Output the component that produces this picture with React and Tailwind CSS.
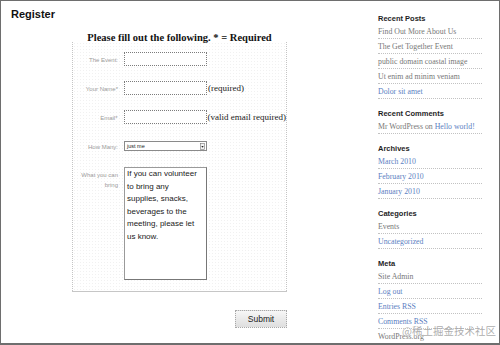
import { useState } from "react";

const sans = "font-['Liberation_Sans',Arial,sans-serif]";
const serif = "font-['Liberation_Serif','Times_New_Roman',serif]";

const sidebar = [
  {
    title: "Recent Posts",
    items: [
      [{ t: "Find Out More About Us" }],
      [{ t: "The Get Together Event" }],
      [{ t: "public domain coastal image" }],
      [{ t: "Ut enim ad minim veniam" }],
      [{ t: "Dolor sit amet", link: true }],
    ],
  },
  {
    title: "Recent Comments",
    items: [[{ t: "Mr WordPress on" }, { t: "Hello world!", link: true }]],
  },
  {
    title: "Archives",
    items: [
      [{ t: "March 2010", link: true }],
      [{ t: "February 2010", link: true }],
      [{ t: "January 2010", link: true }],
    ],
  },
  {
    title: "Categories",
    items: [[{ t: "Events" }], [{ t: "Uncategorized", link: true }]],
  },
  {
    title: "Meta",
    items: [
      [{ t: "Site Admin" }],
      [{ t: "Log out", link: true }],
      [{ t: "Entries RSS", link: true }],
      [{ t: "Comments RSS", link: true }],
      [{ t: "WordPress.org" }],
    ],
  },
];

const bringLines = [
  "If you can volunteer",
  "to bring any",
  "supplies, snacks,",
  "beverages to the",
  "meeting, please let",
  "us know.",
];

function Field({ label, note }) {
  const [value, setValue] = useState("");
  return (
    <div className="flex items-center">
      <span className={`w-[45px] pt-[2px] text-right text-[6px] leading-[8px] text-[#9b9b9b] ${sans}`}>
        {label}
      </span>
      <input
        value={value}
        onChange={(e) => setValue(e.target.value)}
        className="ml-[6px] h-[14px] w-[83px] shrink-0 border border-dotted border-[#7c7c7c] bg-white outline-none"
      />
      {note && (
        <span className={`ml-[1px] whitespace-nowrap text-[9px] leading-[10px] text-[#222] ${serif}`}>
          {note}
        </span>
      )}
    </div>
  );
}

export default function App() {
  return (
    <div className="relative flex h-[345px] w-[500px] overflow-hidden border border-b-2 border-[#6e6e6e] bg-white">
      {/* main column */}
      <div className="w-[377px] shrink-0">
        <h1 className={`pl-[10px] pt-[7px] text-[11px] font-bold leading-[13px] text-[#111] ${sans}`}>
          Register
        </h1>

        <div className="ml-[71px] w-[215px]">
          <h2 className={`mt-[11px] whitespace-nowrap text-center text-[10.5px] font-bold leading-[12px] text-[#111] ${serif}`}>
            Please fill out the following. * = Required
          </h2>

          {/* form box: dotted sides, solid bottom rule */}
          <div className="mt-[-2px] border-b border-[#c6c6c6]">
            <div className="flex flex-col border-x border-dotted border-[#c4c4c4] bg-[radial-gradient(circle,#f1f1f1_0.6px,transparent_0.8px)] bg-[length:3px_3px] pb-[11px] pt-[10px]">
              <Field label="The Event:" />
              <div className="mt-[15px]">
                <Field label="Your Name*" note="(required)" />
              </div>
              <div className="mt-[15px]">
                <Field label="Email*" note="(valid email required)" />
              </div>

              <div className="mt-[17px] flex items-center">
                <span className={`w-[45px] pt-[1px] text-right text-[6px] leading-[8px] text-[#9b9b9b] ${sans}`}>
                  How Many:
                </span>
                <div className="ml-[6px] flex h-[10px] w-[83px] items-center justify-between border border-[#8a8a8a] bg-white pl-[2px] pr-[1px]">
                  <span className={`text-[5.5px] leading-[8px] text-[#222] ${sans}`}>just me</span>
                  <svg width="5" height="7" viewBox="0 0 5 7" className="shrink-0">
                    <rect x="0.5" y="0.5" width="4" height="6" fill="#f2f2f2" stroke="#777" strokeWidth="0.6" />
                    <path d="M1.3 3 L3.7 3 L2.5 4.8 Z" fill="#222" />
                  </svg>
                </div>
              </div>

              <div className="mt-[16px] flex items-start">
                <span className={`w-[45px] pt-[3px] text-right text-[6px] leading-[10.4px] text-[#9b9b9b] ${sans}`}>
                  What you can
                  <br />
                  bring
                </span>
                <div className={`ml-[6px] h-[113px] w-[83px] border border-[#9a9a9a] border-b-[#777] border-r-[#777] bg-white pl-[2px] text-[8px] leading-[12.6px] text-[#1a1a1a] ${sans}`}>
                  {bringLines.map((l) => (
                    <div key={l} className="whitespace-nowrap">
                      {l}
                    </div>
                  ))}
                </div>
              </div>
            </div>
          </div>

          <div className="mt-[18px] flex justify-end">
            <button
              className={`h-[18px] w-[52px] border border-dotted border-[#a8a8a8] bg-gradient-to-b from-[#f7f7f7] to-[#dedede] text-[8.5px] leading-[16px] text-[#1a1a1a] ${sans}`}
            >
              Submit
            </button>
          </div>
        </div>

        <p className={`ml-[122px] mt-[14px] whitespace-nowrap text-[7px] italic leading-[8px] text-[#b5b5b5] ${sans}`}>
          (Form contact form by dobrbar.dom)
        </p>
      </div>

      {/* sidebar */}
      <aside className="w-[104px] shrink-0 pt-[3px]">
        {sidebar.map((sec) => (
          <div key={sec.title} className="mt-[10px]">
            <h3 className={`h-[10px] text-[7.5px] font-bold leading-[10px] text-[#1e1e1e] ${sans}`}>
              {sec.title}
            </h3>
            <ul>
              {sec.items.map((parts, i) => (
                <li
                  key={i}
                  className={`flex h-[15px] items-center gap-[2px] whitespace-nowrap border-b border-dotted border-[#c2c2c2] pt-[1px] text-[7.8px] leading-[10px] ${serif}`}
                >
                  {parts.map((p) => (
                    <span key={p.t} className={p.link ? "text-[#5b80c2]" : "text-[#777777]"}>
                      {p.t}
                    </span>
                  ))}
                </li>
              ))}
            </ul>
          </div>
        ))}
      </aside>

      {/* watermark */}
      <div className="pointer-events-none absolute right-[3px] top-[323px] whitespace-nowrap font-['Noto_Sans_CJK_SC',sans-serif] text-[10.5px] leading-[14px] text-[#a3a3a3]/90 [text-shadow:0_0_2px_#fff]">
        @稀土掘金技术社区
      </div>
    </div>
  );
}
